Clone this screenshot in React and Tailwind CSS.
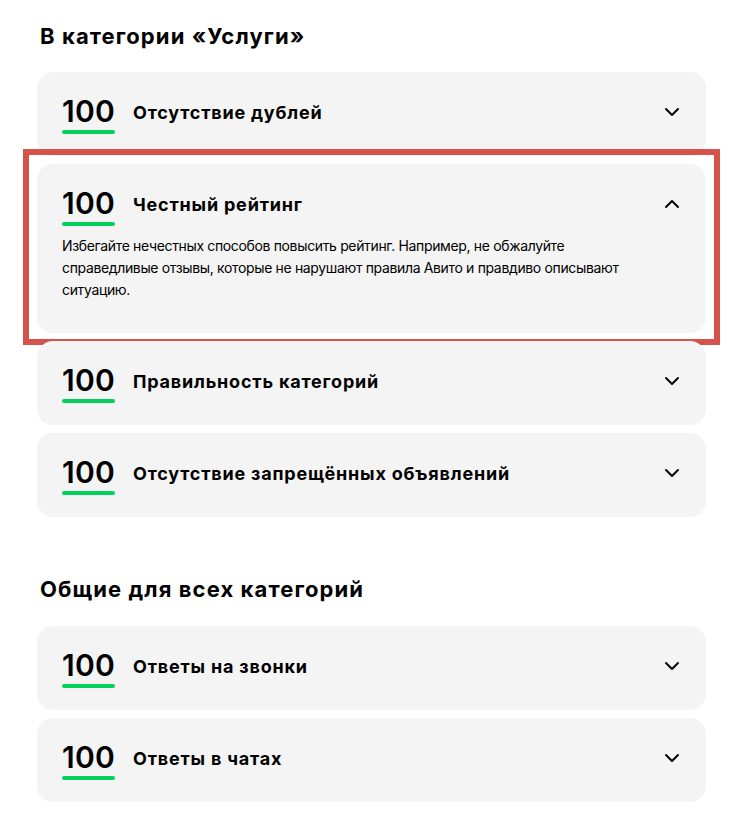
import { useState } from "react"

const services = [
  { id: 1, score: 100, title: "Отсутствие дублей" },
  {
    id: 2,
    score: 100,
    title: "Честный рейтинг",
    text: "Избегайте нечестных способов повысить рейтинг. Например, не обжалуйте справедливые отзывы, которые не нарушают правила Авито и правдиво описывают ситуацию.",
  },
  { id: 3, score: 100, title: "Правильность категорий" },
  { id: 4, score: 100, title: "Отсутствие запрещённых объявлений" },
]

const common = [
  { id: 5, score: 100, title: "Ответы на звонки" },
  { id: 6, score: 100, title: "Ответы в чатах" },
]

function Chevron({ up }) {
  return (
    <svg width="18" height="18" viewBox="0 0 18 18" fill="none" className={up ? "rotate-180" : ""}>
      <path d="M3 6l6 6 6-6" stroke="#000" strokeWidth="2" strokeLinecap="round" strokeLinejoin="round" />
    </svg>
  )
}

function Item({ item, open, onToggle, highlight }) {
  return (
    <div className="relative">
      <div className={"bg-[#f4f4f4] rounded-[16px] pl-[25px] pr-[24px] pt-[22px] " + (open ? "pb-[32px]" : "pb-[22px]")}>
        <button className="w-full flex items-center h-[40px] text-left cursor-pointer" onClick={onToggle}>
          <div className="flex flex-col w-[53px]">
            <span className="text-[30px] leading-[32px] font-semibold tracking-[0.3px] text-black">{item.score}</span>
            <span className="h-[4px] w-full rounded-full bg-[#02d15c] mt-[3px]"></span>
          </div>
          <span className="ml-[18px] text-[18px] font-bold tracking-[0.8px] text-black flex-1 -mt-[4px]">{item.title}</span>
          <span className="mr-[1px] -mt-[4px]"><Chevron up={open} /></span>
        </button>
        {open && (
          <p className="mt-[9px] text-[14px] leading-[22px] tracking-[-0.35px] text-black pr-[20px]">{item.text}</p>
        )}
      </div>
      {highlight && (
        <div className="absolute -left-[14px] -right-[14px] -top-[15px] -bottom-[12px] border-[6px] border-[#d4534a] pointer-events-none"></div>
      )}
    </div>
  )
}

export default function App() {
  const [openId, setOpenId] = useState(2)
  const toggle = id => setOpenId(openId === id ? null : id)

  return (
    <div className="min-h-screen bg-white font-['Inter','Noto_Sans',sans-serif] pl-[37px] pr-[49px] pt-[22px] pb-[27px]">
      <h2 className="text-[22px] leading-[28px] font-bold tracking-[1.1px] text-black ml-[3px] mb-[22px]">В категории «Услуги»</h2>
      <div className="flex flex-col gap-[8px]">
        {services.map(s => (
          <Item key={s.id} item={s} open={openId === s.id} onToggle={() => toggle(s.id)} highlight={s.id === 2} />
        ))}
      </div>
      <h2 className="text-[22px] leading-[28px] font-bold tracking-[1.1px] text-black ml-[3px] mt-[58px] mb-[23px]">Общие для всех категорий</h2>
      <div className="flex flex-col gap-[8px]">
        {common.map(s => (
          <Item key={s.id} item={s} open={openId === s.id} onToggle={() => toggle(s.id)} />
        ))}
      </div>
    </div>
  )
}
